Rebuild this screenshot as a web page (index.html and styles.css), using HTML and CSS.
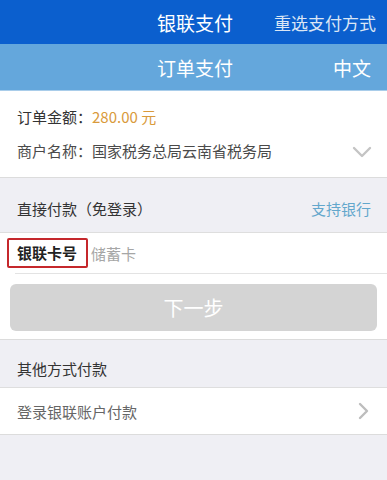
FILE: index.html
```html
<!DOCTYPE html>
<html>
    <head>
        <meta charset="utf-8">
        <title>银联支付</title>
        <link rel="stylesheet" href="styles.css">
    </head>
    <body>
        <div class="page">
            <!-- 顶部 -->
            <div class="topbar">
                <span class="topbar-title">银联支付</span>
                <span class="topbar-link">重选支付方式</span>
            </div>
            <div class="subbar">
                <span class="subbar-title">订单支付</span>
                <span class="subbar-lang">中文</span>
            </div>
            <!-- 订单信息 -->
            <div class="order">
                <div class="order-row">订单金额：<span class="amount">280.00 元</span></div>
                <div class="order-row order-row-more">
                    <span>商户名称：国家税务总局云南省税务局</span>
                    <svg class="icon-down" width="20" height="12" viewBox="0 0 20 12">
                        <path d="M2 2 L10 10 L18 2" fill="none" stroke="#c4c4c4" stroke-width="2.4" stroke-linecap="round" stroke-linejoin="round"/>
                    </svg>
                </div>
            </div>
            <!-- 直接付款 -->
            <div class="section-head section-head-first">
                <span>直接付款（免登录）</span>
                <span class="bank-link">支持银行</span>
            </div>
            <div class="card-box">
                <div class="card-row">
                    <span class="card-label">银联卡号</span>
                    <span class="card-input">储蓄卡</span>
                </div>
                <div class="divider-inset"></div>
                <div class="btn-wrap">
                    <div class="btn-next">下一步</div>
                </div>
            </div>
            <!-- 其他方式 -->
            <div class="section-head section-head-other">
                <span>其他方式付款</span>
            </div>
            <div class="link-row">
                <span>登录银联账户付款</span>
                <svg class="icon-right" width="12" height="18" viewBox="0 0 12 18">
                    <path d="M2 2 L9 9 L2 16" fill="none" stroke="#bdbdbd" stroke-width="2.4" stroke-linecap="round" stroke-linejoin="round"/>
                </svg>
            </div>
        </div>
    </body>
</html>
```

FILE: styles.css
```css
body {
    margin: 0;
    font-family: "Noto Sans CJK SC", "Noto Sans", sans-serif;
    background-color: #efeff4;
}
.page {
    width: 387px;
    min-height: 480px;
    background-color: #efeff4;
}
.topbar {
    height: 44px;
    background-color: #0b5fce;
    display: flex;
    align-items: center;
    padding-left: 157px;
    padding-right: 11px;
    justify-content: space-between;
}
.topbar-title {
    color: #ffffff;
    font-size: 19px;
}
.topbar-link {
    color: #dbe6f5;
    font-size: 17px;
}
.subbar {
    height: 46px;
    background-color: #64a7dc;
    border-bottom: 1px solid #a9cdea;
    display: flex;
    align-items: center;
    padding-left: 157px;
    padding-right: 16px;
    justify-content: space-between;
}
.subbar-title, .subbar-lang {
    color: #ffffff;
    font-size: 19px;
}
.order {
    background-color: #ffffff;
    padding: 9px 15px 9px 17px;
    border-bottom: 1px solid #dcdcdc;
}
.order-row {
    height: 34px;
    line-height: 34px;
    font-size: 15px;
    color: #333333;
}
.order-row-more {
    display: flex;
    align-items: center;
    justify-content: space-between;
    color: #4a4a4a;
}
.amount {
    color: #d99a3b;
}
.icon-down {
    margin-top: 2px;
}
.section-head {
    display: flex;
    justify-content: space-between;
    font-size: 15px;
    color: #333333;
    padding: 0 16px 0 17px;
    border-bottom: 1px solid #dedede;
}
.section-head-first {
    height: 54px;
    line-height: 62px;
}
.section-head-other {
    height: 47px;
    line-height: 58px;
}
.bank-link {
    color: #63a7cc;
}
.card-box {
    background-color: #ffffff;
    border-bottom: 1px solid #dcdcdc;
}
.card-row {
    height: 40px;
    display: flex;
    align-items: center;
    padding-left: 7px;
}
.card-label {
    border: 2px solid #c5282c;
    border-radius: 2px;
    height: 26px;
    line-height: 26px;
    padding: 0 9px 0 8px;
    font-size: 15px;
    font-weight: bold;
    color: #222222;
}
.card-input {
    margin-left: 3px;
    font-size: 15px;
    color: #a6a6a6;
}
.divider-inset {
    height: 1px;
    margin-left: 15px;
    background-color: #e3e3e3;
}
.btn-wrap {
    padding: 10px 10px 8px 10px;
}
.btn-next {
    height: 47px;
    line-height: 47px;
    background-color: #d4d4d4;
    border-radius: 6px;
    text-align: center;
    color: #ffffff;
    font-size: 20px;
}
.link-row {
    background-color: #ffffff;
    height: 46px;
    display: flex;
    align-items: center;
    justify-content: space-between;
    padding: 0 17px 0 17px;
    font-size: 15px;
    color: #666666;
    border-bottom: 1px solid #dcdcdc;
}
```
